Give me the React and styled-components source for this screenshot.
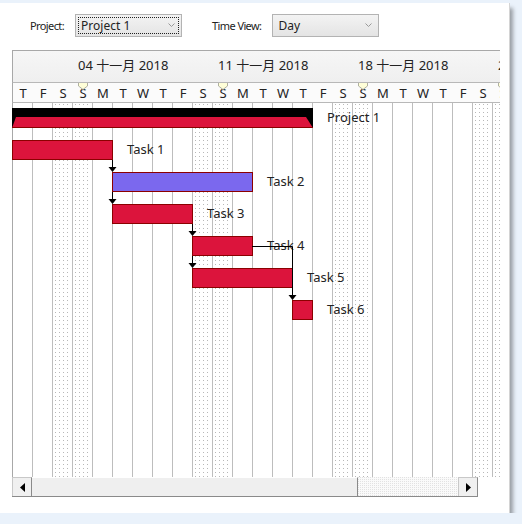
import React from "react";
import styled, { createGlobalStyle } from "styled-components";

const COL = 20;
const ROW = 32;
const DAYS = ["T", "F", "S", "S", "M", "T", "W"];
const COLUMNS = 25;

const weeks = ["04 十一月 2018", "11 十一月 2018", "18 十一月 2018", "25 十一月 2018"];

const tasks = [
  { name: "Project 1", start: 0, dur: 15, summary: true },
  { name: "Task 1", start: 0, dur: 5 },
  { name: "Task 2", start: 5, dur: 7, color: "#7b68ee" },
  { name: "Task 3", start: 5, dur: 4 },
  { name: "Task 4", start: 9, dur: 3 },
  { name: "Task 5", start: 9, dur: 5 },
  { name: "Task 6", start: 14, dur: 1 },
];

const GlobalStyle = createGlobalStyle`
  html, body {
    margin: 0;
    padding: 0;
    background: #eaf2fb;
  }
  body {
    font-family: "Noto Sans", "Noto Sans CJK SC", sans-serif;
  }
`;

const Window = styled.div`
  width: 509px;
  height: 510px;
  margin-top: 3px;
  background: #fff;
  border-right: 1px solid #d4d4d4;
  box-shadow: 3px 5px 4px rgba(0, 0, 0, 0.35);
  display: flex;
  flex-direction: column;
`;

const Toolbar = styled.div`
  display: flex;
  align-items: center;
  height: 23px;
  margin-top: 11px;
  padding-left: 30px;
`;

const Label = styled.span`
  font-size: 11px;
  letter-spacing: -0.6px;
  color: #222;
  margin-right: ${(p) => p.$gap}px;
`;

const Select = styled.div`
  position: relative;
  box-sizing: border-box;
  width: 107px;
  height: 23px;
  border: 1px solid #b3b3b3;
  background: linear-gradient(#f3f3f3, #e4e4e4);
  display: flex;
  align-items: center;
  padding-left: 5px;
  font-size: 12px;
  color: #222;
  margin-right: ${(p) => p.$gap || 0}px;

  &::after {
    content: "";
    display: ${(p) => (p.$focused ? "block" : "none")};
    position: absolute;
    inset: 2px;
    border: 1px dotted #222;
  }
`;

const Chevron = styled.svg`
  position: absolute;
  right: 6px;
  top: 8px;
`;

const Chart = styled.div`
  margin: 13px 0 0 12px;
  width: 488px;
  display: flex;
  flex-direction: column;
  overflow: hidden;
`;

const WeekRow = styled.div`
  display: flex;
  height: 31px;
  border-top: 1px solid #a8a8a8;
  border-left: 1px solid #a8a8a8;
  border-bottom: 1px solid #b8b8b8;
  background: linear-gradient(#f6f6f6, #efefef);
`;

const WeekCell = styled.div`
  flex: 0 0 ${(p) => p.$w}px;
  box-sizing: border-box;
  padding-left: 5px;
  font-size: 13px;
  line-height: 28px;
  color: #222;
  white-space: nowrap;
  overflow: hidden;
`;

const DayRow = styled.div`
  display: flex;
  height: 19px;
  border-left: 1px solid #a8a8a8;
  border-bottom: 1px solid #b8b8b8;
  background: #fbfbfb;
`;

const DayCell = styled.div`
  position: relative;
  flex: 0 0 ${COL}px;
  text-align: center;
  font-size: 13px;
  line-height: 20px;
  color: #222;
  overflow: hidden;
`;

const Marker = styled.svg`
  position: absolute;
  left: 5px;
  top: -1px;
`;

const Body = styled.div`
  position: relative;
  height: 374px;
  border-left: 1px solid #a8a8a8;
  padding-top: 1px;
  box-sizing: border-box;
`;

const Grid = styled.div`
  position: absolute;
  inset: 0;
  display: flex;
`;

const GridCol = styled.div`
  flex: 0 0 ${COL}px;
  box-sizing: border-box;
  border-right: 1px solid #bdbdbd;
  background-color: #fff;
  background-image: ${(p) =>
    p.$weekend ? "conic-gradient(at 1px 1px, #fff 75%, #b8b8b8 0)" : "none"};
  background-size: 4px 4px;
  background-position: 2px 1px;
  background-clip: content-box;
  padding: 0 1px;
`;

const Row = styled.div`
  position: relative;
  display: flex;
  align-items: flex-start;
  height: ${ROW}px;
`;

const Bar = styled.div`
  box-sizing: border-box;
  height: 20px;
  margin-top: 4px;
  background: ${(p) => p.$color || "#dc143c"};
  border: 1px solid #8b0000;
  flex-shrink: 0;
`;

const Summary = styled.svg`
  margin-top: 4px;
  flex-shrink: 0;
`;

const TaskLabel = styled.span`
  margin: 4px 0 0 14px;
  font-size: 13px;
  line-height: 18px;
  color: #222;
  white-space: nowrap;
`;

const Links = styled.svg`
  position: absolute;
  left: 0;
  top: 0;
  pointer-events: none;
`;

const Scrollbar = styled.div`
  display: flex;
  width: 466px;
  height: 20px;
  border-bottom: 1px solid #8a8a8a;
  box-sizing: border-box;
`;

const ScrollButton = styled.div`
  flex: 0 0 20px;
  box-sizing: border-box;
  border: 1px solid #c8c8c8;
  border-right-color: #8a8a8a;
  border-bottom: none;
  background: #f0f0f0;
  display: flex;
  align-items: center;
  justify-content: center;
`;

const Thumb = styled.div`
  flex: 0 0 326px;
  box-sizing: border-box;
  border-top: 1px solid #fff;
  border-right: 1px solid #8a8a8a;
  background: #efefef;
`;

const Track = styled.div`
  flex: 1;
  background: conic-gradient(at 1px 1px, #fafafa 75%, #e2e2e2 0) 0 0 / 2px 2px;
`;

const Arrow = ({ x, y }) => (
  <polygon points={`${x - 3.5},${y - 5} ${x + 4.5},${y - 5} ${x + 0.5},${y}`} fill="#000" />
);

const Line = ({ d }) => <path d={d} stroke="#000" strokeWidth="1" fill="none" />;

const Caret = () => (
  <Chevron width="7" height="5" viewBox="0 0 7 5">
    <path d="M0.5 0.5 L3.5 3.5 L6.5 0.5" stroke="#999" fill="none" />
  </Chevron>
);

const App = () => {
  const cols = Array.from({ length: COLUMNS }, (_, i) => DAYS[i % 7]);

  return (
    <>
      <GlobalStyle />
      <Window>
        <Toolbar>
          <Label $gap={11}>Project:</Label>
          <Select $focused $gap={30}>
            Project 1
            <Caret />
          </Select>
          <Label $gap={11}>Time View:</Label>
          <Select>
            Day
            <Caret />
          </Select>
        </Toolbar>

        <Chart>
          <WeekRow>
            <WeekCell $w={COL * 3} />
            {weeks.map((w) => (
              <WeekCell key={w} $w={COL * 7}>
                {w}
              </WeekCell>
            ))}
          </WeekRow>

          <DayRow>
            {cols.map((d, i) => (
              <DayCell key={i}>
                {i % 7 === 3 && (
                  <Marker width="10" height="8" viewBox="0 0 10 8">
                    <path d="M0.5 0.5 H9.5 V4 L5 7.5 L0.5 4 Z" fill="#ffffd8" stroke="#b0b0a0" />
                  </Marker>
                )}
                {d}
              </DayCell>
            ))}
          </DayRow>

          <Body>
            <Grid>
              {cols.map((d, i) => (
                <GridCol key={i} $weekend={i % 7 === 2 || i % 7 === 3} />
              ))}
            </Grid>

            {tasks.map((t) => {
              const width = t.dur * COL + 1;
              return (
                <Row key={t.name}>
                  {t.summary ? (
                    <Summary
                      width={width}
                      height="20"
                      viewBox={`0 0 ${width} 20`}
                      style={{ marginLeft: t.start * COL - 1 }}
                    >
                      <rect x="0" y="0" width={width} height="20" fill="#000" />
                      <polygon
                        points={`0,20 4,9 ${width - 7},9 ${width},20`}
                        fill="#dc143c"
                      />
                      <line x1="0" y1="19.5" x2={width} y2="19.5" stroke="#8b0000" />
                    </Summary>
                  ) : (
                    <Bar
                      $color={t.color}
                      style={{ marginLeft: t.start * COL - 1, width }}
                    />
                  )}
                  <TaskLabel>{t.name}</TaskLabel>
                </Row>
              );
            })}

            <Links width="488" height="374" viewBox="0 0 488 374">
              <Line d="M99.5 57 V64" />
              <Arrow x={99} y={69} />
              <Line d="M99.5 89 V96" />
              <Arrow x={99} y={101} />
              <Line d="M179.5 121 V128" />
              <Arrow x={179} y={133} />
              <Line d="M179.5 153 V160" />
              <Arrow x={179} y={165} />
              <Line d="M239 143.5 H279.5 V192" />
              <Line d="M279.5 185 V192" />
              <Arrow x={279} y={197} />
            </Links>
          </Body>

          <Scrollbar>
            <ScrollButton>
              <svg width="5" height="9" viewBox="0 0 5 9">
                <polygon points="5,0 5,9 0,4.5" fill="#000" />
              </svg>
            </ScrollButton>
            <Thumb />
            <Track />
            <ScrollButton>
              <svg width="5" height="9" viewBox="0 0 5 9">
                <polygon points="0,0 0,9 5,4.5" fill="#000" />
              </svg>
            </ScrollButton>
          </Scrollbar>
        </Chart>
      </Window>
    </>
  );
};

export default App;
